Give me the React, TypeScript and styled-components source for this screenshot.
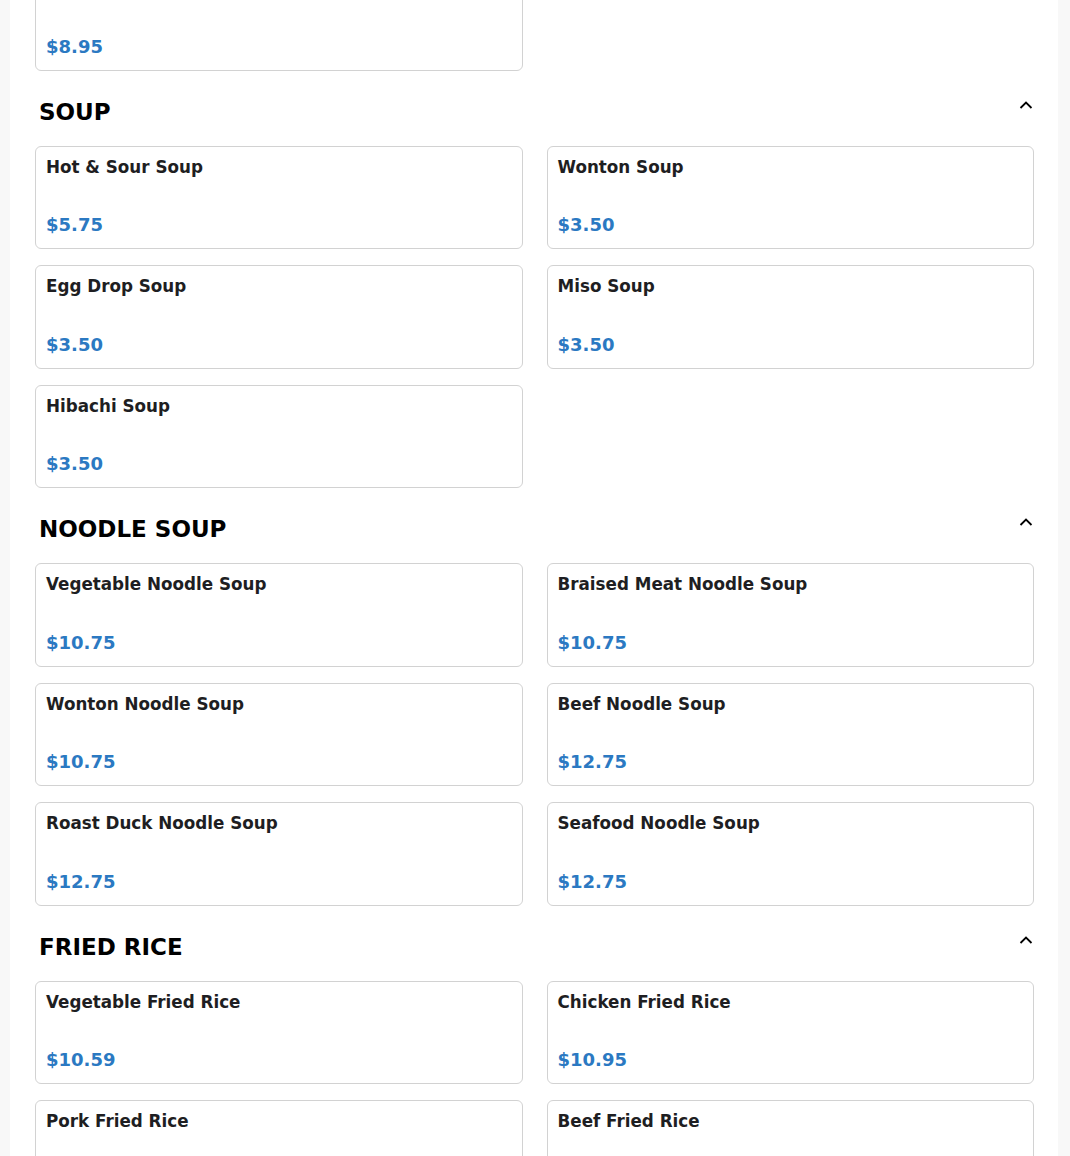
import React, { useState } from "react";
import styled, { createGlobalStyle } from "styled-components";

type Item = { name: string; price: string };
type Section = { title: string; items: Item[] };

const previous: Item[] = [{ name: "Egg Roll", price: "$8.95" }];

const sections: Section[] = [
  {
    title: "SOUP",
    items: [
      { name: "Hot & Sour Soup", price: "$5.75" },
      { name: "Wonton Soup", price: "$3.50" },
      { name: "Egg Drop Soup", price: "$3.50" },
      { name: "Miso Soup", price: "$3.50" },
      { name: "Hibachi Soup", price: "$3.50" },
    ],
  },
  {
    title: "NOODLE SOUP",
    items: [
      { name: "Vegetable Noodle Soup", price: "$10.75" },
      { name: "Braised Meat Noodle Soup", price: "$10.75" },
      { name: "Wonton Noodle Soup", price: "$10.75" },
      { name: "Beef Noodle Soup", price: "$12.75" },
      { name: "Roast Duck Noodle Soup", price: "$12.75" },
      { name: "Seafood Noodle Soup", price: "$12.75" },
    ],
  },
  {
    title: "FRIED RICE",
    items: [
      { name: "Vegetable Fried Rice", price: "$10.59" },
      { name: "Chicken Fried Rice", price: "$10.95" },
      { name: "Pork Fried Rice", price: "$10.95" },
      { name: "Beef Fried Rice", price: "$11.95" },
    ],
  },
];

const GlobalStyle = createGlobalStyle`
  * { box-sizing: border-box; }
  body {
    margin: 0;
    background: #f8f8f8;
    font-family: "DejaVu Sans", "Noto Sans", sans-serif;
  }
`;

const Page = styled.div`
  width: 1048px;
  min-height: 100vh;
  margin-left: 10px;
  padding: 0 24px 40px 25px;
  background: #ffffff;
  overflow: hidden;
`;

const Grid = styled.div<{ $cut?: boolean }>`
  display: grid;
  grid-template-columns: 1fr 1fr;
  column-gap: 24px;
  row-gap: 16px;
  margin-top: ${(p) => (p.$cut ? "-33px" : "20px")};
`;

const Block = styled.section`
  padding-top: 28px;
`;

const Header = styled.div`
  display: flex;
  justify-content: space-between;
  align-items: flex-start;
  padding: 0 1px 0 4px;
  cursor: pointer;
`;

const Heading = styled.h2`
  margin: 0;
  font-size: 23px;
  line-height: 27px;
  font-weight: 700;
  color: #000;
`;

const Toggle = styled.svg`
  margin-top: 2px;
  flex-shrink: 0;
`;

const Card = styled.div`
  height: 103.5px;
  display: flex;
  flex-direction: column;
  justify-content: space-between;
  padding: 10px 10px 13px;
  border: 1px solid #d2d2d2;
  border-radius: 6px;
  background: #fff;
`;

const Name = styled.div`
  font-size: 16.75px;
  font-weight: 700;
  color: #1e1e22;
`;

const Price = styled.div`
  font-size: 18px;
  font-weight: 700;
  color: #2b79c2;
`;

const MenuCard: React.FC<{ item: Item }> = ({ item }) => (
  <Card>
    <Name>{item.name}</Name>
    <Price>{item.price}</Price>
  </Card>
);

const MenuSection: React.FC<{ section: Section }> = ({ section }) => {
  const [open, setOpen] = useState(true);

  return (
    <Block>
      <Header onClick={() => setOpen(!open)}>
        <Heading>{section.title}</Heading>
        <Toggle width="14" height="8" viewBox="0 0 14 8">
          <polyline
            points={open ? "1.5,7 7,1.5 12.5,7" : "1.5,1 7,6.5 12.5,1"}
            fill="none"
            stroke="#000"
            strokeWidth="1.8"
          />
        </Toggle>
      </Header>
      {open && (
        <Grid>
          {section.items.map((item) => (
            <MenuCard key={item.name} item={item} />
          ))}
        </Grid>
      )}
    </Block>
  );
};

export default function App() {
  return (
    <>
      <GlobalStyle />
      <Page>
        <Grid $cut>
          {previous.map((item) => (
            <MenuCard key={item.name} item={item} />
          ))}
        </Grid>
        {sections.map((s) => (
          <MenuSection key={s.title} section={s} />
        ))}
      </Page>
    </>
  );
}
